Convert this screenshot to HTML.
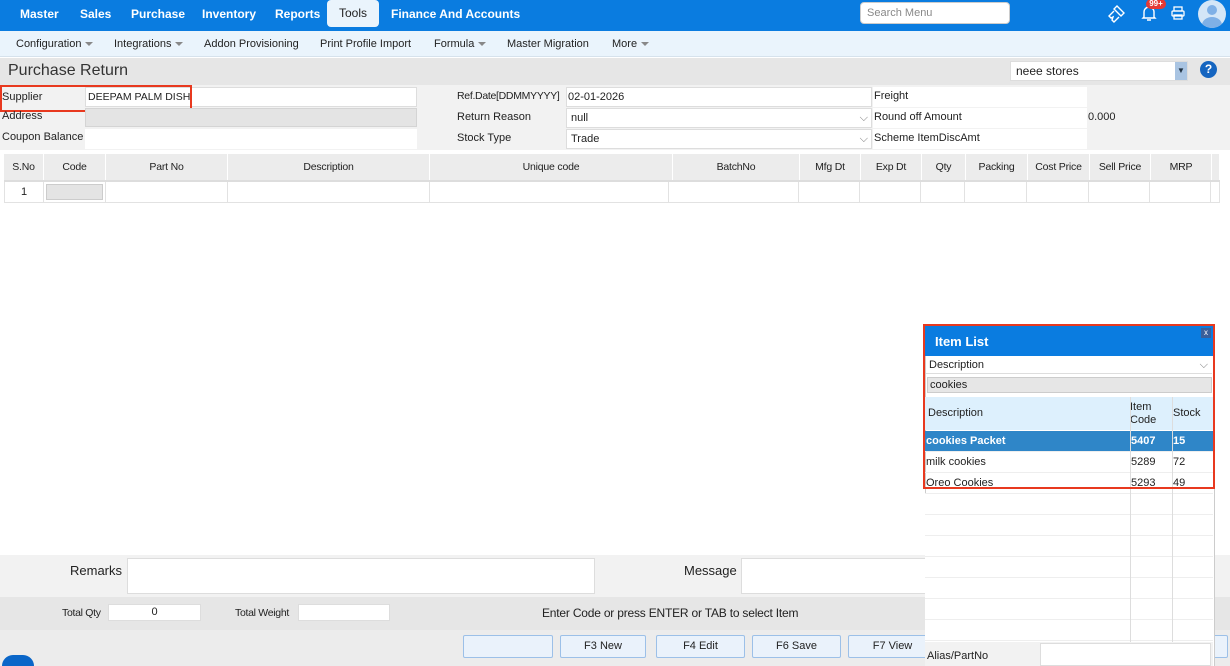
<!DOCTYPE html>
<html><head><meta charset="utf-8"><style>
*{box-sizing:border-box;margin:0;padding:0}
html{width:1230px;height:666px;overflow:hidden}
body{width:1230px;height:666px;overflow:hidden;background:#fff;font-family:"Liberation Sans",sans-serif;font-size:11px;color:#222;position:relative}
.a{position:absolute}
.nav{left:0;top:0;width:1230px;height:31px;background:#0a7ce0}
.nav span{position:absolute;top:7px;color:#fff;font-weight:bold;font-size:12px}
.sub{left:0;top:31px;width:1230px;height:26px;background:#eaf4fc;border-bottom:1px solid #d6e2ec}
.sub span{position:absolute;top:7px;font-size:11px;color:#222}
.car{display:inline-block;width:0;height:0;border-left:4px solid transparent;border-right:4px solid transparent;border-top:4px solid #888;margin-left:4px;vertical-align:middle}
.inp{background:#fff;border:1px solid #ddd}
.th{top:154px;height:26px;background:#ececec;border-right:1px solid #fff;text-align:center;line-height:26px;font-size:10.5px;letter-spacing:-0.2px}
.td{top:182px;height:21px;border-right:1px solid #e2e2e2;border-bottom:1px solid #e2e2e2;background:#fff}
.btn{top:635px;height:23px;border:1px solid #9cc0e8;background:#eaf2fb;border-radius:2px;text-align:center;line-height:21px;font-size:11px}
.ir{left:925px;width:288px;height:21px;border-bottom:1px solid #eee}
.ir span{position:absolute;top:4px}
</style></head><body>
<div class="a nav">
<span style="left:20px">Master</span><span style="left:80px">Sales</span><span style="left:131px">Purchase</span><span style="left:202px">Inventory</span><span style="left:275px">Reports</span>
<div class="a" style="left:327px;top:0;width:52px;height:27px;background:#eaf4fc;border-radius:4px;color:#222;font-size:12px;text-align:center;line-height:27px">Tools</div>
<span style="left:391px">Finance And Accounts</span>
<div class="a" style="left:860px;top:2px;width:150px;height:22px;background:#fff;border-radius:4px;border:1px solid #ccc;color:#888;font-size:11px;padding:4px 6px;font-weight:normal">Search Menu</div>
<svg class="a" style="left:1106px;top:4px" width="20" height="20" viewBox="0 0 20 20" fill="none" stroke="#fff" stroke-width="1.4"><path d="M11 2l7 7-3 3-7-7zM8 7l-5 5 2 2 2-1-1 3 2 2 5-5"/></svg>
<svg class="a" style="left:1141px;top:4px" width="16" height="18" viewBox="0 0 16 18" fill="none" stroke="#fff" stroke-width="1.4"><path d="M3 13V8a5 5 0 0110 0v5l1 1H2zM6 16h4"/></svg>
<div class="a" style="left:1146px;top:-1px;width:20px;height:10px;background:#e53935;border-radius:5px;color:#fff;font-size:8px;line-height:10px;text-align:center;font-weight:bold">99+</div>
<svg class="a" style="left:1171px;top:6px" width="14" height="14" viewBox="0 0 14 14" fill="none" stroke="#fff" stroke-width="1.3"><rect x="3" y="1" width="8" height="4"/><rect x="1" y="5" width="12" height="5" rx="1"/><rect x="3" y="9" width="8" height="4"/></svg>
<div class="a" style="left:1198px;top:0px;width:28px;height:28px;border-radius:50%;background:#d4e6f7;overflow:hidden"><div class="a" style="left:9px;top:5px;width:10px;height:10px;border-radius:50%;background:#7fb0e6"></div><div class="a" style="left:4px;top:17px;width:20px;height:16px;border-radius:50%;background:#7fb0e6"></div></div>
</div>
<div class="a sub">
<span style="left:16px">Configuration<i class="car"></i></span><span style="left:114px">Integrations<i class="car"></i></span><span style="left:204px">Addon Provisioning</span><span style="left:320px">Print Profile Import</span><span style="left:434px">Formula<i class="car"></i></span><span style="left:507px">Master Migration</span><span style="left:612px">More<i class="car"></i></span>
</div>
<div class="a" style="left:0;top:58px;width:1230px;height:27px;background:#e6e6e6"></div>
<div class="a" style="left:8px;top:62px;font-size:16px;color:#333">Purchase Return</div>
<div class="a inp" style="left:1010px;top:61px;width:178px;height:20px;font-size:12px;padding:2px 5px;color:#222">neee stores</div>
<div class="a" style="left:1175px;top:62px;width:12px;height:18px;background:#a9c4e2;color:#234;font-size:8px;text-align:center;line-height:18px">▼</div>
<div class="a" style="left:1200px;top:61px;width:17px;height:17px;border-radius:50%;background:#1565c0;color:#fff;font-weight:bold;font-size:12px;text-align:center;line-height:17px">?</div>
<div class="a" style="left:0;top:85px;width:1230px;height:65px;background:#f2f2f2"></div>
<div class="a" style="left:2px;top:91px">Supplier</div>
<div class="a inp" style="left:85px;top:87px;width:332px;height:20px;padding:3px 2px;font-size:10.5px">DEEPAM PALM DISH</div>
<div class="a" style="left:0;top:85px;width:192px;height:27px;border:2px solid #e8391f"></div>
<div class="a" style="left:2px;top:110px">Address</div>
<div class="a" style="left:85px;top:108px;width:332px;height:19px;background:#e4e4e4;border:1px solid #d4d4d4"></div>
<div class="a" style="left:2px;top:131px">Coupon Balance</div>
<div class="a" style="left:85px;top:129px;width:332px;height:20px;background:#fff"></div>
<div class="a" style="left:457px;top:90px;font-size:10.5px;letter-spacing:-0.3px">Ref.Date[DDMMYYYY]</div>
<div class="a inp" style="left:566px;top:87px;width:306px;height:20px;padding:3px 1px">02-01-2026</div>
<div class="a" style="left:457px;top:111px">Return Reason</div>
<div class="a inp" style="left:566px;top:108px;width:306px;height:20px;padding:3px 4px">null<span style="position:absolute;right:3px;color:#777">⌵</span></div>
<div class="a" style="left:457px;top:132px">Stock Type</div>
<div class="a inp" style="left:566px;top:129px;width:306px;height:20px;padding:3px 4px">Trade<span style="position:absolute;right:3px;color:#777">⌵</span></div>
<div class="a" style="left:873px;top:87px;width:214px;height:20px;background:#fff;padding:3px 1px">Freight</div>
<div class="a" style="left:873px;top:108px;width:214px;height:20px;background:#fff;padding:3px 1px">Round off Amount</div>
<div class="a" style="left:1088px;top:111px">0.000</div>
<div class="a" style="left:873px;top:129px;width:214px;height:20px;background:#fff;padding:3px 1px">Scheme ItemDiscAmt</div>
<div class="a" style="left:4px;top:179px;width:1216px;height:3px;background:#ddd"></div>
<div class="a th" style="left:4px;width:40px">S.No</div><div class="a th" style="left:44px;width:62px">Code</div><div class="a th" style="left:106px;width:122px">Part No</div><div class="a th" style="left:228px;width:202px">Description</div><div class="a th" style="left:430px;width:243px">Unique code</div><div class="a th" style="left:673px;width:127px">BatchNo</div><div class="a th" style="left:800px;width:61px">Mfg Dt</div><div class="a th" style="left:861px;width:61px">Exp Dt</div><div class="a th" style="left:922px;width:44px">Qty</div><div class="a th" style="left:966px;width:62px">Packing</div><div class="a th" style="left:1028px;width:62px">Cost Price</div><div class="a th" style="left:1090px;width:61px">Sell Price</div><div class="a th" style="left:1151px;width:61px">MRP</div><div class="a th" style="left:1212px;width:8px"></div>
<div class="a td" style="left:4px;width:40px;text-align:center;line-height:20px;border-left:1px solid #e2e2e2">1</div><div class="a td" style="left:44px;width:62px"><div style="margin:2px;height:16px;background:#e4e4e4;border:1px solid #ccc"></div></div><div class="a td" style="left:106px;width:122px"></div><div class="a td" style="left:228px;width:202px"></div><div class="a td" style="left:430px;width:239px"></div><div class="a td" style="left:669px;width:130px"></div><div class="a td" style="left:799px;width:61px"></div><div class="a td" style="left:860px;width:61px"></div><div class="a td" style="left:921px;width:44px"></div><div class="a td" style="left:965px;width:62px"></div><div class="a td" style="left:1027px;width:62px"></div><div class="a td" style="left:1089px;width:61px"></div><div class="a td" style="left:1150px;width:61px"></div><div class="a td" style="left:1211px;width:9px"></div>
<div class="a" style="left:0;top:555px;width:1230px;height:42px;background:#f2f2f2"></div>
<div class="a" style="left:70px;top:563px;font-size:13px">Remarks</div>
<div class="a inp" style="left:127px;top:558px;width:468px;height:36px"></div>
<div class="a" style="left:684px;top:563px;font-size:13px">Message</div>
<div class="a inp" style="left:741px;top:558px;width:200px;height:36px"></div>
<div class="a" style="left:0;top:597px;width:1230px;height:33px;background:#e6e6e6"></div>
<div class="a" style="left:0;top:630px;width:1230px;height:36px;background:#ececec"></div>
<div class="a" style="left:62px;top:607px;font-size:10.5px;letter-spacing:-0.3px">Total Qty</div>
<div class="a inp" style="left:108px;top:604px;width:93px;height:17px;text-align:center;line-height:15px">0</div>
<div class="a" style="left:235px;top:607px;font-size:10.5px;letter-spacing:-0.3px">Total Weight</div>
<div class="a inp" style="left:298px;top:604px;width:92px;height:17px"></div>
<div class="a" style="left:542px;top:606px;font-size:12px;letter-spacing:-0.2px">Enter Code or press ENTER or TAB to select Item</div>
<div class="a btn" style="left:463px;width:90px"></div><div class="a btn" style="left:560px;width:86px">F3 New</div><div class="a btn" style="left:656px;width:89px">F4 Edit</div><div class="a btn" style="left:752px;width:89px">F6 Save</div><div class="a btn" style="left:848px;width:89px">F7 View</div><div class="a btn" style="left:1210px;width:18px"></div>
<div class="a" style="left:2px;top:655px;width:32px;height:11px;border-radius:16px 16px 0 0;background:#0a66c8"></div>
<div class="a" style="left:925px;top:324px;width:290px;height:342px;background:#fff;border-left:1px solid #ccc;border-right:1px solid #ccc"></div>
<div class="a" style="left:925px;top:326px;width:288px;height:30px;background:#0a7ce0;color:#fff;font-weight:bold;font-size:13px;padding:8px 10px">Item List</div>
<div class="a" style="left:1201px;top:328px;width:10px;height:10px;background:#3a5f9a;color:#fff;font-size:8px;text-align:center;line-height:10px">x</div>
<div class="a" style="left:926px;top:357px;width:286px;height:17px;padding:2px 3px;border-bottom:1px solid #ddd">Description<span style="position:absolute;right:4px;color:#777">⌵</span></div>
<div class="a" style="left:927px;top:377px;width:285px;height:16px;background:#e6e6e6;border:1px solid #ccc;padding:1px 2px">cookies</div>
<div class="a" style="left:925px;top:397px;width:288px;height:33px;background:#ddf0fd"></div>
<div class="a" style="left:928px;top:407px">Description</div>
<div class="a" style="left:1130px;top:401px;line-height:13px">Item<br>Code</div>
<div class="a" style="left:1173px;top:407px">Stock</div>
<div class="a ir" style="top:431px;background:#2f86c8;color:#fff;font-weight:bold"><span style="left:1px">cookies Packet</span><span style="left:206px">5407</span><span style="left:248px">15</span></div>
<div class="a ir" style="top:452px"><span style="left:1px">milk cookies</span><span style="left:206px">5289</span><span style="left:248px">72</span></div>
<div class="a ir" style="top:473px"><span style="left:1px">Oreo Cookies</span><span style="left:206px">5293</span><span style="left:248px">49</span></div>
<div class="a" style="left:925px;top:494px;width:288px;height:148px;background:repeating-linear-gradient(#fff 0,#fff 20px,#eee 20px,#eee 21px)"></div>
<div class="a" style="left:1130px;top:397px;width:1px;height:245px;background:#ddd"></div>
<div class="a" style="left:1172px;top:397px;width:1px;height:245px;background:#ddd"></div>
<div class="a" style="left:923px;top:324px;width:292px;height:165px;border:2px solid #e8391f"></div>
<div class="a" style="left:925px;top:642px;width:288px;height:24px;background:#f2f2f2"></div>
<div class="a" style="left:927px;top:650px">Alias/PartNo</div>
<div class="a inp" style="left:1040px;top:643px;width:171px;height:23px"></div>
</body></html>
